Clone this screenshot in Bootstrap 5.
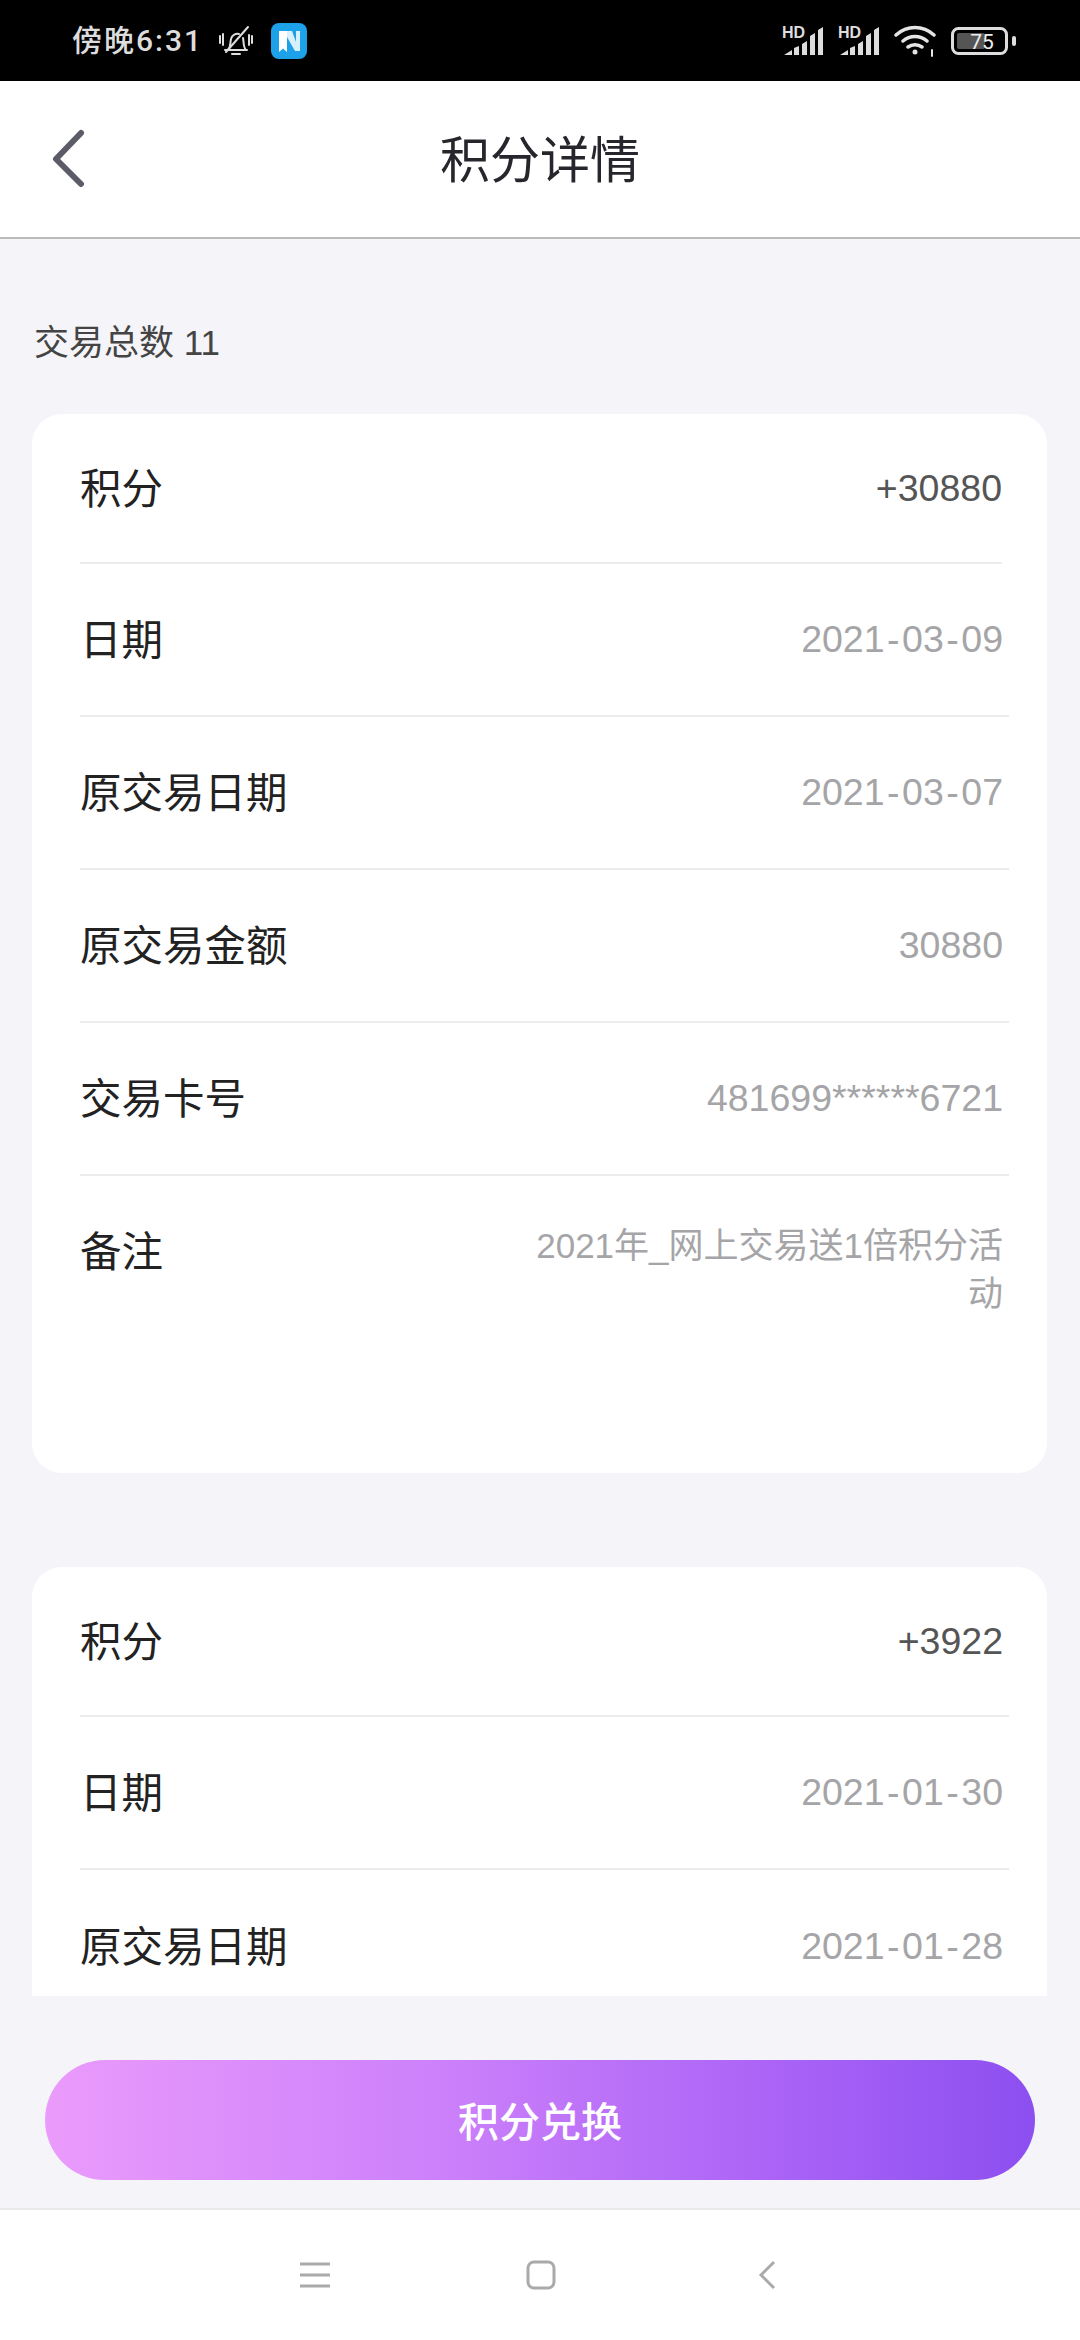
<!DOCTYPE html>
<html lang="zh-CN">
<head>
    <meta charset="UTF-8">
    <meta name="viewport" content="width=device-width, initial-scale=1.0">
    <title>积分详情</title>
    <link href="https://cdn.jsdelivr.net/npm/bootstrap@5.3.3/dist/css/bootstrap.min.css" rel="stylesheet">
    <style>
        body {
            width: 1080px;
            height: 2340px;
            overflow: hidden;
            background: #f4f4f9;
            font-family: "Liberation Sans", "Noto Sans CJK SC", sans-serif;
            color: #222;
        }
        .status-strip { height: 81px; background: #000; color: #ddd; padding: 0 64px 0 72px; }
        .status-time { font-family: Roboto, "Noto Sans CJK SC", sans-serif; font-size: 30px; font-weight: 500; letter-spacing: 2px; }
        .bell-icon { margin-left: 16px; }
        .app-icon { margin-left: 18px; }
        .status-icons { gap: 15px; }
        .hd-icon { margin-top: -6px; }
        .title-strip { height: 158px; background: #fff; border-bottom: 2px solid #bbb; }
        .title-text { font-size: 50px; color: #26262c; padding-top: 4px; }
        .back-btn { left: 50px; top: 48px; }
        .total-text { font-size: 35px; color: #444; height: 175px; padding: 0 0 0 34px; line-height: 207px; }
        .list-clip { height: 1582px; overflow: hidden; padding: 0 33px 0 32px; }
        .point-card { background: #fff; border-radius: 30px; padding: 0 38px 0 48px; }
        .first-card { height: 1059px; margin-bottom: 94px; }
        .point-row { height: 153px; border-bottom: 2px solid #ececec; }
        .point-row:first-child { height: 150px; }
        .point-row:last-child { border-bottom: 0; }
        .first-card .point-row:first-child { margin-right: 7px; }
        .first-card .point-row:first-child .row-value { padding-right: 0; }
        .note-row { padding-top: 49px; }
        .row-label { font-size: 41.500px; color: #222; white-space: nowrap; line-height: 1.2; padding-top: 3px; }
        .row-value { font-size: 37.500px; color: #a5a5a8; text-align: right; line-height: 47px; padding-right: 6px; }
        .row-value.strong-value { color: #555; }
        .dash-gap { margin: 0 2.500px; }
        .note-text { width: 480px; font-size: 35px; line-height: 48px; margin-top: -3px; }
        .btn-zone { height: 214px; padding: 64px 45px 0; border-bottom: 2px solid #e9e9ec; }
        .exchange-btn {
            height: 120px;
            border: 0;
            border-radius: 60px;
            background: linear-gradient(90deg, #ea9bfb 0%, #cc80fa 40%, #a962f6 75%, #8c4ff0 100%);
            color: #fff;
            font-size: 41px;
            font-weight: 500;
            font-family: "Noto Sans CJK SC", sans-serif;
        }
        .exchange-btn:hover { background: linear-gradient(90deg, #ea9bfb 0%, #cc80fa 40%, #a962f6 75%, #8c4ff0 100%); color: #fff; }
        .sys-nav { height: 130px; background: #fff; padding-left: 2px; }
        .nav-slot { width: 226px; }
    </style>
</head>
<body>

<!-- status bar -->
<div class="status-strip d-flex align-items-center justify-content-between">
    <div class="d-flex align-items-center">
        <span class="status-time">傍晚6:31</span>
        <svg class="bell-icon" width="34" height="32" viewBox="0 0 34 32" fill="none" stroke="#ddd" stroke-width="2" stroke-linecap="round">
            <path d="M6 25h22M9 25c3-3 2-7 3-11 1-4 5-6 8-5M24 13c1 4 0 9 3 12M13 29h8"/>
            <path d="M7 27L29 2"/>
            <path d="M1 11v7M4 9v11M33 11v7M30 10v10"/>
        </svg>
        <svg class="app-icon" width="36" height="36" viewBox="0 0 36 36">
            <rect width="36" height="36" rx="8" fill="#1da1e8"/>
            <path d="M8 8h8v21l-4-3.500-4 3.500z" fill="#fff"/>
            <path d="M16 8h5l4 11V8h4v20h-5l-8-14z" fill="#d8f0fb"/>
        </svg>
    </div>
    <div class="status-icons d-flex align-items-center">
        <svg class="hd-icon" width="41" height="36" viewBox="0 -6 41 36">
            <text x="0" y="12" font-family="Liberation Sans, sans-serif" font-size="16" font-weight="700" fill="#ddd">HD</text>
            <path d="M2 29l8-5v5zM12 22l5-2v9h-5zM20 18l5-3v14h-5zM28 10l5-3v22h-5zM36 4l5-3v28h-5z" fill="#ddd"/>
        </svg>
        <svg class="hd-icon" width="41" height="36" viewBox="0 -6 41 36">
            <text x="0" y="12" font-family="Liberation Sans, sans-serif" font-size="16" font-weight="700" fill="#ddd">HD</text>
            <path d="M2 29l8-5v5zM12 22l5-2v9h-5zM20 18l5-3v14h-5zM28 10l5-3v22h-5zM36 4l5-3v28h-5z" fill="#ddd"/>
        </svg>
        <svg width="42" height="32" viewBox="0 0 42 32" fill="none" stroke="#e4e4e4" stroke-width="3.500" stroke-linecap="round">
            <path d="M2 10c11-10 27-10 38 0M9 16c7-6 17-6 24 0M14 22c4-3 10-3 14 0"/>
            <circle cx="21" cy="27" r="2.500" fill="#e4e4e4" stroke="none"/>
            <path d="M38 25v6" stroke-width="2"/>
        </svg>
        <svg width="65" height="28" viewBox="0 0 65 28">
            <rect x="1.500" y="1.500" width="54" height="25" rx="6" fill="none" stroke="#ddd" stroke-width="3"/>
            <rect x="6" y="6" width="28" height="16" rx="2" fill="#555"/>
            <rect x="61" y="9" width="4" height="10" rx="2" fill="#ddd"/>
            <text x="31" y="22" text-anchor="middle" font-family="Roboto, sans-serif" font-size="21" fill="#eee">75</text>
        </svg>
    </div>
</div>

<!-- title -->
<div class="title-strip position-relative d-flex align-items-center justify-content-center">
    <svg class="back-btn position-absolute" width="36" height="60" viewBox="0 0 36 60" fill="none" stroke="#5c5c68" stroke-width="6" stroke-linecap="round" stroke-linejoin="round">
        <path d="M31 4L6 30l25 25"/>
    </svg>
    <span class="title-text">积分详情</span>
</div>

<div class="total-text">交易总数 11</div>

<div class="list-clip">
    <div class="point-card first-card">
        <div class="point-row d-flex justify-content-between align-items-center">
            <span class="row-label">积分</span><span class="row-value strong-value">+30880</span>
        </div>
        <div class="point-row d-flex justify-content-between align-items-center">
            <span class="row-label">日期</span><span class="row-value">2021<span class="dash-gap">-</span>03<span class="dash-gap">-</span>09</span>
        </div>
        <div class="point-row d-flex justify-content-between align-items-center">
            <span class="row-label">原交易日期</span><span class="row-value">2021<span class="dash-gap">-</span>03<span class="dash-gap">-</span>07</span>
        </div>
        <div class="point-row d-flex justify-content-between align-items-center">
            <span class="row-label">原交易金额</span><span class="row-value">30880</span>
        </div>
        <div class="point-row d-flex justify-content-between align-items-center">
            <span class="row-label">交易卡号</span><span class="row-value">481699******6721</span>
        </div>
        <div class="point-row note-row d-flex justify-content-between align-items-start">
            <span class="row-label">备注</span><span class="row-value note-text">2021年_网上交易送1倍积分活动</span>
        </div>
    </div>
    <div class="point-card">
        <div class="point-row d-flex justify-content-between align-items-center">
            <span class="row-label">积分</span><span class="row-value strong-value">+3922</span>
        </div>
        <div class="point-row d-flex justify-content-between align-items-center">
            <span class="row-label">日期</span><span class="row-value">2021<span class="dash-gap">-</span>01<span class="dash-gap">-</span>30</span>
        </div>
        <div class="point-row d-flex justify-content-between align-items-center">
            <span class="row-label">原交易日期</span><span class="row-value">2021<span class="dash-gap">-</span>01<span class="dash-gap">-</span>28</span>
        </div>
    </div>
</div>

<div class="btn-zone">
    <button class="btn exchange-btn w-100" type="button">积分兑换</button>
</div>

<!-- system navigation -->
<div class="sys-nav d-flex justify-content-center align-items-center">
    <div class="nav-slot d-flex justify-content-center">
        <svg width="30" height="26" viewBox="0 0 30 26" stroke="#aaa" stroke-width="3"><path d="M0 2h30M0 13h30M0 24h30"/></svg>
    </div>
    <div class="nav-slot d-flex justify-content-center">
        <svg width="30" height="30" viewBox="0 0 30 30" fill="none" stroke="#aaa" stroke-width="3"><rect x="2" y="2" width="26" height="26" rx="6"/></svg>
    </div>
    <div class="nav-slot d-flex justify-content-center">
        <svg width="18" height="30" viewBox="0 0 18 30" fill="none" stroke="#aaa" stroke-width="3"><path d="M16 2L3 15l13 13"/></svg>
    </div>
</div>

<script src="https://cdn.jsdelivr.net/npm/bootstrap@5.3.3/dist/js/bootstrap.bundle.min.js"></script>
</body>
</html>
